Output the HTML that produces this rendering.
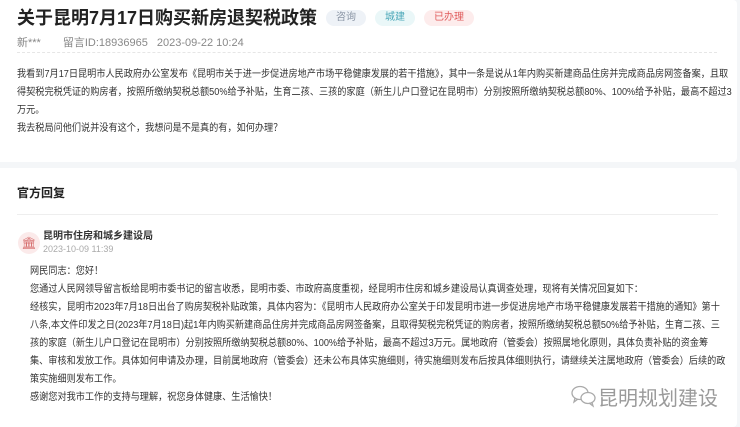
<html><head><style>
body{margin:0;width:740px;height:427px;background:#f4f6f8;font-family:"Liberation Sans","Noto Sans CJK SC",sans-serif;overflow:hidden;position:relative}
.c{position:absolute;left:0;width:737px;background:#fff;border-radius:0 4px 4px 0}
.t{position:absolute;white-space:nowrap}
.p{font-size:10px;color:#333;line-height:18px;position:absolute;white-space:nowrap;transform:scaleX(0.915);transform-origin:0 0}
.tag{display:inline-block;font-size:10px;font-weight:normal;padding:0 10px;height:16px;line-height:16px;border-radius:8px;margin-left:9px;vertical-align:4px}
</style></head><body>
<div class="c" style="top:0;height:162px"></div>
<div class="c" style="top:168px;height:259px"></div>
<div class="t" style="left:17px;top:4px;font-size:18px;font-weight:bold;color:#222">关于昆明7月17日购买新房退契税政策<span class="tag" style="background:#eef2f7;color:#8a95a5">咨询</span><span class="tag" style="background:#eaf7f8;color:#4aa7b8">城建</span><span class="tag" style="background:#fdecec;color:#e05c5c">已办理</span></div>
<div class="t" style="left:17px;top:34px;font-size:11px;color:#888">新***<span style="margin-left:22px">留言ID:18936965</span><span style="margin-left:9px">2023-09-22 10:24</span></div>
<div style="position:absolute;left:17px;top:52px;width:700px;border-top:1px dashed #e6e6e6"></div>
<div class="p" style="left:17px;top:66px">我看到7月17日昆明市人民政府办公室发布《昆明市关于进一步促进房地产市场平稳健康发展的若干措施》，其中一条是说从1年内购买新建商品住房并完成商品房网签备案，且取<br>得契税完税凭证的购房者，按照所缴纳契税总额50%给予补贴，生育二孩、三孩的家庭（新生儿户口登记在昆明市）分别按照所缴纳契税总额80%、100%给予补贴，最高不超过3<br>万元。<br>我去税局问他们说并没有这个，我想问是不是真的有，如何办理？</div>
<div class="t" style="left:17px;top:184px;font-size:12px;font-weight:bold;color:#222">官方回复</div>
<div style="position:absolute;left:17px;top:214px;width:701px;border-top:1px solid #eee"></div>
<div style="position:absolute;left:18px;top:232px;width:22px;height:22px;border-radius:50%;background:#fbeaea;color:#d56a6a;font-size:12px;text-align:center;line-height:22px">🏛</div>
<div class="t" style="left:43px;top:231px;font-size:10px;line-height:11px;font-weight:bold;color:#333">昆明市住房和城乡建设局</div>
<div class="t" style="left:43px;top:244px;font-size:9px;line-height:10px;color:#aaa">2023-10-09 11:39</div>
<div class="p" style="left:30px;top:263px">网民同志：您好！<br>您通过人民网领导留言板给昆明市委书记的留言收悉，昆明市委、市政府高度重视，经昆明市住房和城乡建设局认真调查处理，现将有关情况回复如下：<br>经核实，昆明市2023年7月18日出台了购房契税补贴政策，具体内容为：《昆明市人民政府办公室关于印发昆明市进一步促进房地产市场平稳健康发展若干措施的通知》第十<br>八条,本文件印发之日(2023年7月18日)起1年内购买新建商品住房并完成商品房网签备案，且取得契税完税凭证的购房者，按照所缴纳契税总额50%给予补贴，生育二孩、三<br>孩的家庭（新生儿户口登记在昆明市）分别按照所缴纳契税总额80%、100%给予补贴，最高不超过3万元。属地政府（管委会）按照属地化原则，具体负责补贴的资金筹<br>集、审核和发放工作。具体如何申请及办理，目前属地政府（管委会）还未公布具体实施细则，待实施细则发布后按具体细则执行，请继续关注属地政府（管委会）后续的政<br>策实施细则发布工作。<br>感谢您对我市工作的支持与理解，祝您身体健康、生活愉快！</div>
<svg style="position:absolute;left:570px;top:384px" width="28" height="24" viewBox="0 0 28 24" fill="none" stroke="#aaa" stroke-width="1.3"><ellipse cx="10" cy="9" rx="8" ry="6.5"/><path d="M5 14 L4 18 L8 15"/><ellipse cx="18" cy="14" rx="7" ry="5.5" fill="#fff"/><path d="M22 18.5 L23 22 L19 19"/></svg>
<div class="t" style="left:598px;top:382px;font-size:20px;color:#9a9a9a">昆明规划建设</div>
</body></html>
